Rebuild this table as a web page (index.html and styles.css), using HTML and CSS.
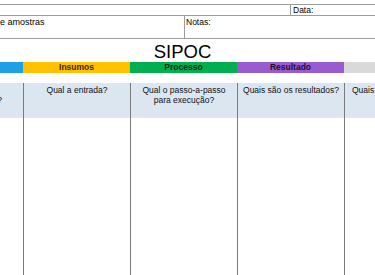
FILE: index.html
```html
<!DOCTYPE html>
<html lang="pt">
<head>
<meta charset="utf-8">
<title>SIPOC</title>
<link rel="stylesheet" href="styles.css">
</head>
<body>
<div class="sheet">
  <div class="row-top"></div>
  <div class="row-data">
    <div class="data-spacer"></div>
    <div class="cell data-cell">Data:</div>
  </div>
  <div class="row-info">
    <div class="cell info-left">e amostras</div>
    <div class="cell notes">Notas:</div>
  </div>
  <div class="title-row"><h1 class="title">SIPOC</h1></div>
  <div class="cols bar">
    <div class="bar-cell c-blue"></div>
    <div class="bar-cell c-orange">Insumos</div>
    <div class="bar-cell c-green">Processo</div>
    <div class="bar-cell c-purple">Resultado</div>
    <div class="bar-cell c-gray"></div>
  </div>
  <div class="gap"></div>
  <div class="cols body">
    <div class="col first"><div class="q q-clip"><span>fornecedores?</span></div></div>
    <div class="col"><div class="q">Qual a entrada?</div></div>
    <div class="col"><div class="q">Qual o passo-a-passo<br>para execução?</div></div>
    <div class="col"><div class="q">Quais são os resultados?</div></div>
    <div class="col last"><div class="q q-left">Quais são os clientes?</div></div>
  </div>
</div>
</body>
</html>
```

FILE: styles.css
```css
html, body {
  margin: 0;
  padding: 0;
  background: #ffffff;
  overflow: hidden;
}

.sheet {
  width: 375px;
  height: 275px;
  overflow: hidden;
  font-family: "Liberation Sans", Arial, sans-serif;
  color: #000000;
  font-size: 8.5px;
}

.row-top {
  height: 4px;
  border-bottom: 1px solid #9c9c9c;
}

.row-data {
  display: flex;
  height: 10px;
  border-bottom: 1px solid #9c9c9c;
}

.data-spacer {
  width: 290px;
  flex: none;
}

.cell {
  line-height: 10px;
  white-space: nowrap;
}

.data-cell {
  flex: 1;
  border-left: 1px solid #9c9c9c;
  padding-left: 2px;
  font-size: 8.5px;
}

.row-info {
  display: flex;
  height: 22px;
  border-bottom: 1px solid #9c9c9c;
}

.info-left {
  width: 184px;
  flex: none;
  font-size: 9px;
  padding-top: 1px;
}

.notes {
  flex: 1;
  border-left: 1px solid #9c9c9c;
  padding-left: 1px;
  font-size: 8.5px;
  padding-top: 1px;
}

.title-row {
  height: 23px;
  display: flex;
  justify-content: center;
  padding-right: 10px;
}

.title {
  margin: 0;
  font-weight: normal;
  font-size: 18.5px;
  line-height: 25px;
}

.cols {
  display: grid;
  grid-template-columns: 23px 107px 107px 107px 1fr;
}

.bar {
  height: 11px;
}

.bar-cell {
  font-weight: bold;
  font-size: 8.5px;
  line-height: 11px;
  text-align: center;
  color: #111111;
}

.c-blue { background: #1f9fe6; }
.c-orange { background: #ffc000; color: #3d2600; }
.c-green { background: #00b050; color: #0b2a14; }
.c-purple { background: #9b5bd0; color: #1f0d2c; }
.c-gray { background: #d9d9d9; }

.gap {
  height: 10px;
}

.body {
  height: 192px;
}

.col {
  border-left: 1px solid #7a7a7a;
  overflow: hidden;
}

.col.first {
  border-left: none;
}

.q {
  height: 35px;
  background: #dce6f1;
  text-align: center;
  line-height: 10px;
  padding-top: 2px;
  box-sizing: border-box;
  white-space: nowrap;
  color: #111111;
}

.q-clip {
  display: flex;
  justify-content: flex-end;
  align-items: flex-start;
  padding-top: 12px;
  padding-right: 21px;
}

.q-left {
  text-align: left;
  padding-left: 7px;
}
```
